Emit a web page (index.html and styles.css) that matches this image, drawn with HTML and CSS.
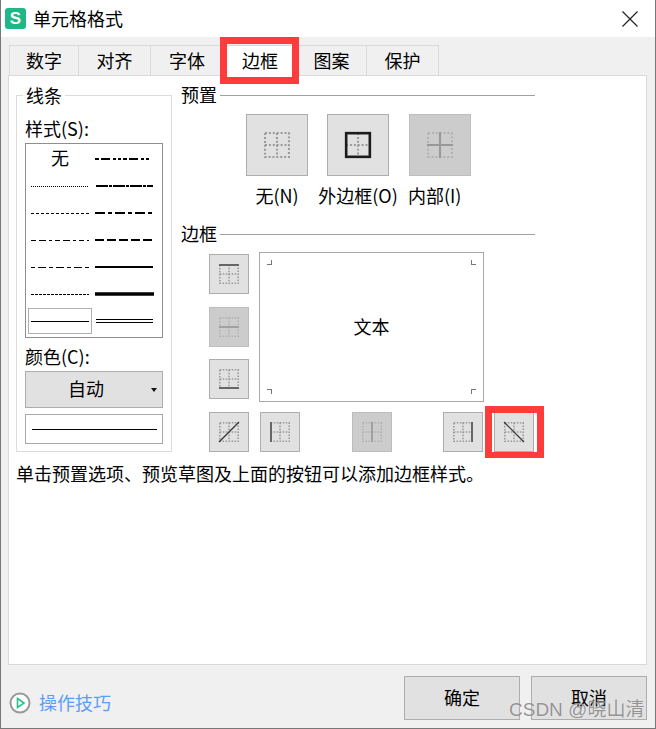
FILE: index.html
```html
<!DOCTYPE html>
<html lang="zh-CN">
<head>
<meta charset="utf-8">
<title>单元格格式</title>
<link rel="stylesheet" href="styles.css">
</head>
<body>
<svg class="defs" width="0" height="0" aria-hidden="true">
  <symbol id="g" viewBox="0 0 20 20"><path class="dots" d="M.8.8H19.2V19.2H.8ZM10 .8V19.2M.8 10H19.2"/></symbol>
</svg>
<div class="win">
  <header class="title">
    <span class="logo">S</span>
    <span class="title-text">单元格格式</span>
    <svg class="close" viewBox="0 0 16 16"><path d="M.5.5 15.5 15.5M15.5.5.5 15.5"/></svg>
  </header>

  <nav class="tabs">
    <div class="tab w70">数字</div>
    <div class="tab w72">对齐</div>
    <div class="tab w73">字体</div>
    <div class="tab w73 on">边框</div>
    <div class="tab w70">图案</div>
    <div class="tab w72">保护</div>
  </nav>

  <main class="panel">
    <div class="cols">
      <fieldset class="group">
        <legend>线条</legend>
        <div class="lbl first">样式(S):</div>
        <div class="list">
          <div class="cell none">无</div>
          <div class="cell"><svg class="ln"><line class="w2" x1="0" x2="54" y1="3" y2="3" stroke-dasharray="4 2 9 3 3 2 3 2"/></svg></div>
          <div class="cell"><svg class="ln"><line class="w1" x1="0" x2="58" y1="3.5" y2="3.5" stroke-dasharray="1 1"/></svg></div>
          <div class="cell"><svg class="ln"><line class="w2" x1="1" x2="58" y1="3" y2="3" stroke-dasharray="12 1 3 1"/></svg></div>
          <div class="cell"><svg class="ln"><line class="w1" x1="0" x2="58" y1="3.5" y2="3.5" stroke-dasharray="3 2"/></svg></div>
          <div class="cell"><svg class="ln"><line class="w2" x1="0" x2="58" y1="3" y2="3" stroke-dasharray="10 3 4 3"/></svg></div>
          <div class="cell"><svg class="ln"><line class="w1" x1="0" x2="58" y1="3.5" y2="3.5" stroke-dasharray="5 3 7 3 3 3"/></svg></div>
          <div class="cell"><svg class="ln"><line class="w2" x1="0" x2="58" y1="3" y2="3" stroke-dasharray="9 3"/></svg></div>
          <div class="cell"><svg class="ln"><line class="w1" x1="0" x2="58" y1="3.5" y2="3.5" stroke-dasharray="4 3 8 3"/></svg></div>
          <div class="cell"><svg class="ln"><line class="w2" x1="0" x2="58" y1="3" y2="3"/></svg></div>
          <div class="cell"><svg class="ln"><line class="w1" x1="0" x2="58" y1="3.5" y2="3.5" stroke-dasharray="3 1"/></svg></div>
          <div class="cell"><svg class="ln"><line class="w3" x1="0" x2="59" y1="3" y2="3"/></svg></div>
          <div class="cell sel"><svg class="ln"><line class="w1" x1="0" x2="58" y1="3.5" y2="3.5"/></svg></div>
          <div class="cell"><svg class="ln"><path class="w1" d="M1 1.5H58M1 4.5H58"/></svg></div>
        </div>
        <div class="lbl">颜色(C):</div>
        <div class="color">自动<span class="caret"></span></div>
        <div class="swatch"></div>
      </fieldset>

      <div class="right">
        <div class="sec"><span>预置</span><i></i></div>
        <div class="presets">
          <div class="preset">
            <div class="btn big"><svg class="i26" viewBox="0 0 20 20"><use href="#g"/></svg></div>
            <div class="cap">无(N)</div>
          </div>
          <div class="preset">
            <div class="btn big"><svg class="i26" viewBox="0 0 20 20"><use href="#g"/><rect class="outer" x=".9" y=".9" width="18.2" height="18.2"/></svg></div>
            <div class="cap">外边框(O)</div>
          </div>
          <div class="preset">
            <div class="btn big off"><svg class="i26" viewBox="0 0 20 20"><use class="fade" href="#g"/><path class="mk-off" d="M10 0V20M0 10H20"/></svg></div>
            <div class="cap tight">内部(I)</div>
          </div>
        </div>

        <div class="sec sec2"><span>边框</span><i></i></div>
        <div class="edit">
          <div class="side">
            <div class="btn"><svg class="i20" viewBox="0 0 20 20"><use href="#g"/><path class="mk" d="M0 1H20"/></svg></div>
            <div class="btn off"><svg class="i20" viewBox="0 0 20 20"><use class="fade" href="#g"/><path class="mk-off" d="M0 10H20"/></svg></div>
            <div class="btn"><svg class="i20" viewBox="0 0 20 20"><use href="#g"/><path class="mk" d="M0 19H20"/></svg></div>
          </div>
          <div class="preview">
            <i class="c tl"></i><i class="c tr"></i>
            <span class="pv-text">文本</span>
            <i class="c bl"></i><i class="c br"></i>
          </div>
        </div>
        <div class="row">
          <div class="btn"><svg class="i20" viewBox="0 0 20 20"><use href="#g"/><path class="mk thin" d="M0 20 20 0"/></svg></div>
          <div class="btn"><svg class="i20" viewBox="0 0 20 20"><use href="#g"/><path class="mk" d="M1 0V20"/></svg></div>
          <div class="btn off wide"><svg class="i20" viewBox="0 0 20 20"><use class="fade" href="#g"/><path class="mk-off" d="M10 0V20"/></svg></div>
          <div class="btn wider"><svg class="i20" viewBox="0 0 20 20"><use href="#g"/><path class="mk" d="M19 0V20"/></svg></div>
          <div class="btn"><svg class="i20" viewBox="0 0 20 20"><use href="#g"/><path class="mk thin" d="M0 0 20 20"/></svg></div>
        </div>
      </div>
    </div>
    <p class="hint">单击预置选项、预览草图及上面的按钮可以添加边框样式。</p>
  </main>

  <footer class="foot">
    <a class="help">
      <svg class="help-ic" viewBox="0 0 22 22"><circle cx="11" cy="11" r="9.5"/><path d="M8.5 6.5 15 11 8.5 15.5Z"/></svg>
      <span>操作技巧</span>
    </a>
    <div class="actions">
      <div class="act">确定</div>
      <div class="act">取消</div>
    </div>
  </footer>

  <div class="mark mark-tab"></div>
  <div class="mark mark-btn"></div>
  <div class="wm">CSDN @晓山清</div>
</div>
</body>
</html>
```
FILE: styles.css
```css
* { box-sizing: border-box; }
html, body { margin: 0; padding: 0; background: #f0f0f0; }
body { font-family: "Noto Sans CJK SC", "Noto Sans", sans-serif; font-size: 18px; color: #000; }
.defs { position: absolute; }

.win {
  position: relative; width: 656px; height: 729px; display: flex; flex-direction: column;
  background: #f0f0f0; border: 1px solid #777; border-top: 0; overflow: hidden;
}

.title { height: 37px; background: #fff; display: flex; align-items: center; padding-left: 4px; flex: none; }
.logo {
  width: 21px; height: 21px; border-radius: 3px; background: #1fb785; color: #fff;
  font: 700 17px/21px "Liberation Sans", sans-serif; text-align: center; margin-top: -1px;
}
.title-text { margin-left: 7px; line-height: 24px; padding-bottom: 2px; }
.close { width: 16px; height: 16px; margin-left: auto; margin-right: 17px; fill: none; stroke: #222; stroke-width: 1.2; }

.tabs { display: flex; margin: 8px 0 0 8px; height: 30px; flex: none; position: relative; z-index: 1; }
.tab {
  height: 30px; background: #f0f0f0; border: 1px solid #d9d9d9; border-left: 0; border-bottom: 0;
  display: flex; align-items: center; justify-content: center; line-height: 24px; padding-bottom: 2px;
}
.tab:first-child { border-left: 1px solid #d9d9d9; }
.tab.on { background: #fff; height: 31px; padding-bottom: 3px; }
.w70 { width: 70px; } .w72 { width: 72px; } .w73 { width: 73px; }

.panel { flex: 1; margin: 0 8px 0 7px; background: #fff; border: 1px solid #d9d9d9; padding: 9px 0 0 7px; }
.cols { display: flex; gap: 9px; align-items: flex-start; }

.group { width: 156px; height: 367px; margin: 0; padding: 0 8px; border: 1px solid #dcdcdc; flex: none; }
.group legend { margin-left: -2px; padding: 0 3px; line-height: 20px; }
.lbl { line-height: 22px; margin-top: 7px; }
.lbl.first { margin-top: 12px; }

.list {
  margin-top: 4px; width: 138px; height: 195px; border: 1px solid #8f8f8f; padding: 1px 0 0 2px;
  display: grid; grid-template-columns: 64px 65px; grid-auto-rows: 27px;
}
.cell { display: flex; align-items: center; justify-content: center; }
.none { line-height: 27px; padding-bottom: 2px; }
.sel { border: 1px solid #b0b0b0; height: 26px; margin-top: 1px; }
.ln { width: 59px; height: 6px; display: block; fill: none; overflow: visible; }
.ln line, .ln path { stroke: #000; }
.w1 { stroke-width: 1; } .w2 { stroke-width: 2; } .w3 { stroke-width: 3.5; }

.color {
  position: relative; margin-top: 4px; height: 37px; width: 138px; background: #e1e1e1; border: 1px solid #adadad;
  text-align: center; line-height: 32px; padding-right: 16px;
}
.caret {
  position: absolute; right: 5px; top: 16px; width: 0; height: 0;
  border-left: 3.5px solid transparent; border-right: 3.5px solid transparent; border-top: 4px solid #111;
}
.swatch { margin-top: 6px; height: 30px; width: 138px; border: 1px solid #a8a8a8; background: #fff; padding: 14px 5px 0 6px; }
.swatch::before { content: ""; display: block; height: 1px; background: #000; }

.right { width: 354px; }
.sec { display: flex; align-items: center; height: 20px; line-height: 20px; }
.sec span { padding-bottom: 2px; }
.sec i { flex: 1; height: 1px; background: #a0a0a0; margin-left: 3px; }
.sec2 { margin-top: 18px; }

.presets { display: flex; gap: 19px; margin: 9px 0 0 65px; }
.preset { width: 62px; }
.preset:last-child { margin-left: 1px; }
.cap { margin-top: 8px; line-height: 22px; white-space: nowrap; display: flex; justify-content: center; }
.cap.tight { justify-content: flex-start; margin-left: -1px; }

.btn { width: 40px; height: 40px; background: #e1e1e1; border: 1px solid #adadad; display: flex; align-items: center; justify-content: center; flex: none; }
.btn.big { width: 62px; height: 62px; }
.btn.off { background: #cccccc; border-color: #bdbdbd; }
.i26 { width: 26px; height: 26px; display: block; overflow: visible; }
.i20 { width: 20px; height: 20px; display: block; overflow: visible; }
.dots { fill: none; stroke: #9a9a9a; stroke-width: 1.6; stroke-dasharray: 1.5 1.5; }
.fade { opacity: .5; }
.outer { fill: none; stroke: #1c1c1c; stroke-width: 2; }
.mk { fill: none; stroke: #666; stroke-width: 2; }
.mk.thin { stroke: #333; stroke-width: 1.2; }
.mk-off { fill: none; stroke: #999; stroke-width: 1.6; }

.edit { display: flex; gap: 10px; margin: 8px 0 0 28px; align-items: flex-start; }
.side { height: 145px; margin-top: 2px; display: flex; flex-direction: column; justify-content: space-between; }
.preview {
  width: 225px; height: 150px; border: 1px solid #a8a8a8; background: #fff; padding: 7px;
  display: grid; grid-template-columns: 5px 1fr 5px; grid-template-rows: 5px 1fr 5px;
}
.pv-text { grid-column: 2; grid-row: 2; display: flex; align-items: center; justify-content: center; line-height: 24px; padding-bottom: 2px; }
.c { display: block; width: 5px; height: 5px; border: 0 solid #777; }
.tl { grid-column: 1; grid-row: 1; border-right-width: 1px; border-bottom-width: 1px; }
.tr { grid-column: 3; grid-row: 1; border-left-width: 1px; border-bottom-width: 1px; }
.bl { grid-column: 1; grid-row: 3; border-right-width: 1px; border-top-width: 1px; }
.br { grid-column: 3; grid-row: 3; border-left-width: 1px; border-top-width: 1px; }

.row { display: flex; gap: 11px; margin: 10px 0 0 28px; }
.wide { margin-left: 41px; }
.wider { margin-left: 40px; }

.hint { margin: 9px 0 0 0; line-height: 24px; white-space: nowrap; }

.foot { height: 63px; flex: none; display: flex; justify-content: space-between; padding: 11px 8px 0 8px; }
.help { display: flex; align-items: center; height: 44px; margin-top: 5px; color: #5a9cf8; }
.help span { padding-bottom: 2px; }
.help-ic { width: 22px; height: 22px; margin-right: 8px; }
.help-ic circle { fill: #fff; stroke: #9a9a9a; stroke-width: 2; }
.help-ic path { fill: #fff; stroke: #27c08f; stroke-width: 1.6; }
.actions { display: flex; gap: 11px; }
.act {
  width: 116px; height: 44px; background: #e1e1e1; border: 1px solid #adadad;
  display: flex; align-items: center; justify-content: center; line-height: 24px; padding-bottom: 2px;
}

.mark { position: absolute; border: 7px solid #ff3b3b; z-index: 3; }
.mark-tab { left: 219px; top: 37px; width: 79px; height: 47px; }
.mark-btn { left: 484px; top: 406px; width: 59px; height: 52px; border-bottom-width: 6px; }
.wm {
  position: absolute; z-index: 4; left: 508px; top: 698px; font-size: 19px; line-height: 24px; white-space: nowrap;
  color: rgba(115,115,115,.75); text-shadow: 0 0 1px rgba(255,255,255,.7);
  font-family: "Liberation Sans", "Noto Sans CJK SC", sans-serif;
}
```
